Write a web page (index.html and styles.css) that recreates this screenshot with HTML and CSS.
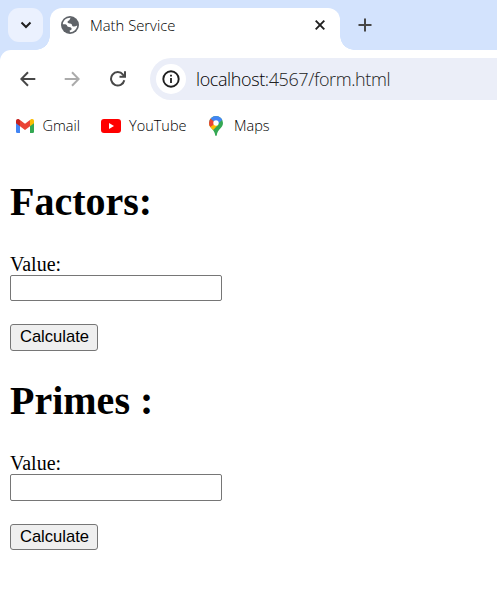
FILE: index.html
```
<!DOCTYPE html>
<html lang="en">
<head>
<meta charset="utf-8">
<title>Math Service</title>
<link rel="stylesheet" href="styles.css">
</head>
<body>
<header class="browser">
  <div class="tab-strip">
    <div class="tab-search">
      <svg width="12" height="8" viewBox="0 0 12 8"><path d="M1.5 1.5 6 6l4.5-4.5" fill="none" stroke="#1f1f1f" stroke-width="2"/></svg>
    </div>
    <div class="tab">
      <svg class="globe" width="20" height="20" viewBox="0 0 20 20"><circle cx="10" cy="10" r="9" fill="#5f6368"/><path d="M10.8 2.8C9.6 3.8 10 5.3 8.5 5.8C7.2 6.3 7.2 8.1 8.6 8.2C10.4 8.3 12 8.6 12 10.2C12.2 12 15 12 17.2 10.6C16.8 14.4 13.8 17.2 10 17.3L9.6 15.4C11.2 15.2 12 14.4 11.5 13.2C11 12 9.4 12.4 8 11.8C6.8 11.2 7.2 9.5 5.4 9.3L2.8 9.2C3.2 5.4 6.6 2.5 10.8 2.8Z" fill="#fff"/></svg>
      <span class="tab-title">Math Service</span>
      <svg class="close" width="10" height="10" viewBox="0 0 10 10"><path d="m.7.7 8.6 8.6M9.3.7.7 9.3" stroke="#1f1f1f" stroke-width="1.9"/></svg>
    </div>
    <svg class="new-tab" width="14" height="14" viewBox="0 0 14 14"><path d="M7 .5v13M.5 7h13" stroke="#474747" stroke-width="2"/></svg>
  </div>
  <div class="toolbar">
    <svg class="back" width="16" height="16" viewBox="0 0 16 16"><path d="M15.3 8H2M8 1.2 1.3 8 8 14.8" fill="none" stroke="#474747" stroke-width="2"/></svg>
    <svg class="forward" width="16" height="16" viewBox="0 0 16 16"><path d="M.7 8H14M8 1.2 14.7 8 8 14.8" fill="none" stroke="#ababab" stroke-width="2"/></svg>
    <svg class="reload" width="16" height="16" viewBox="0 0 16 16"><path d="M14.3 9.2A6.7 6.7 0 1 1 13 3.6l1.3 1.5M15 .3v5.4H9.5" fill="none" stroke="#474747" stroke-width="2"/></svg>
    <div class="address">
      <span class="info"><svg width="18" height="18" viewBox="0 0 18 18"><circle cx="9" cy="9" r="7.7" fill="none" stroke="#1f1f1f" stroke-width="1.9"/><path d="M9 8v5M9 4.8v1.8" stroke="#1f1f1f" stroke-width="1.8"/></svg></span>
      <span class="url"><span class="host">localhost</span>:4567/form.html</span>
    </div>
  </div>
  <nav class="bookmarks">
    <span class="bookmark gmail"><svg width="18" height="14" viewBox="0 0 18 14"><path d="M0 3h4v11H1.2Q0 14 0 12.8Z" fill="#4285f4"/><path d="M14 3h4v9.8q0 1.2-1.2 1.2H14Z" fill="#34a853"/><path d="M14 1l1-.7c1.3-.8 3 0 3 1.7v2.2l-4 3Z" fill="#fbbc04"/><path d="M0 4.2V2C0 .3 1.7-.5 3 .3L4 1v6.2Z" fill="#c5221f"/><path d="M4 1l5 3.8L14 1v6.2L9 11 4 7.2Z" fill="#ea4335"/></svg><span>Gmail</span></span>
    <span class="bookmark youtube"><svg width="20" height="14" viewBox="0 0 20 14"><rect width="20" height="14" rx="3" fill="#f00"/><path d="m8 4 5 3-5 3Z" fill="#fff"/></svg><span>YouTube</span></span>
    <span class="bookmark maps"><svg width="14" height="20" viewBox="0 0 14 20"><defs><clipPath id="pin"><path d="M7 0a7 7 0 0 1 7 7c0 5-5.6 6.2-6.2 12.2Q7.6 20 7 20t-.8-.8C5.6 13.2 0 12 0 7a7 7 0 0 1 7-7Z"/></clipPath></defs><g clip-path="url(#pin)"><path d="M0 0h14v20H0Z" fill="#34a853"/><path d="M-1 7h8l2 2-6.8 7H-1Z" fill="#fbbc04"/><path d="M1.5 2.4 7 7 .6 11.4-1 8V2Z" fill="#ea4335"/><path d="M1.5 2.4 4-1h11v3L8.5 8.2Z" fill="#4285f4"/></g><circle cx="7" cy="7" r="2.7" fill="#fff"/></svg><span>Maps</span></span>
  </nav>
</header>
<main class="page">
  <form class="factors">
    <h1>Factors:</h1>
    <label for="factors-value">Value:</label>
    <input id="factors-value" type="text">
    <button type="button">Calculate</button>
  </form>
  <form class="primes">
    <h1>Primes :</h1>
    <label for="primes-value">Value:</label>
    <input id="primes-value" type="text">
    <button type="button">Calculate</button>
  </form>
</main>
</body>
</html>
```
FILE: styles.css
```
* { box-sizing: border-box; }
body { margin: 0; height: 608px; overflow: hidden; background: #fff; color: #000; font-family: "Liberation Serif", serif; }
svg { display: block; flex: none; }
.browser { height: 150px; font-family: "Open Sans", sans-serif; font-weight: 300; background: #d3e3fd; }
.tab-strip { display: flex; height: 50px; padding-top: 8px; background: #d3e3fd; }
.tab-search { display: flex; align-items: center; justify-content: center; width: 35px; height: 34px; margin-left: 8px; border-radius: 11px; background: #ebf1fe; }
.tab { position: relative; display: flex; width: 290.4px; height: 42px; margin-left: 7px; padding-left: 10px; border-radius: 12px 12px 0 0; background: #fff; }
.tab::before, .tab::after { content: ""; position: absolute; bottom: 0; width: 14px; height: 14px; }
.tab::before { left: -14px; background: radial-gradient(circle at 0 0, transparent 13.5px, #fff 14px); }
.tab::after { right: -14px; background: radial-gradient(circle at 100% 0, transparent 13.5px, #fff 14px); }
.globe { margin-top: 7px; }
.tab-title { width: 214px; margin: 6px 0 0 10px; font-size: 14.8px; line-height: 23px; color: #000; }
.close { margin: 12px 0 0 11px; }
.new-tab { margin: 10px 0 0 18px; }
.toolbar { display: flex; height: 56px; padding-top: 8px; border-radius: 11px 0 0 0; background: #fff; }
.back { margin: 13px 0 0 20px; }
.forward { margin: 13px 0 0 28px; }
.reload { margin: 13px 0 0 29.5px; }
.address { display: flex; align-items: center; flex: 1; height: 42px; margin-left: 24.5px; padding-left: 6px; border-radius: 21px 0 0 21px; background: #ebeef8; }
.info { display: flex; align-items: center; justify-content: center; width: 30px; height: 30px; border-radius: 50%; background: #fff; }
.url { margin-left: 10px; font-size: 18px; letter-spacing: -.4px; line-height: 26px; color: #222; white-space: nowrap; }
.host { color: #000; }
.bookmarks { display: flex; height: 44px; background: #fff; color: #000; font-size: 14.5px; line-height: 20px; }
.bookmark { display: flex; align-items: center; height: 40px; }
.gmail { width: 85px; margin-left: 16px; gap: 8.5px; }
.youtube { width: 108px; gap: 8px; }
.maps { gap: 11px; }
.page { padding: 29px 10px 0; }
form { display: flex; flex-direction: column; align-items: flex-start; }
h1 { margin: 0 0 27px; font-size: 40px; line-height: 46px; font-weight: 700; }
label { height: 23px; font-size: 20px; line-height: 25px; }
input { width: 212px; height: 26px; margin: 0; padding: 1px 2px; border: 1px solid #767676; border-radius: 2px; background: #fff; font: 16.6px "Liberation Sans", sans-serif; }
button { width: 88px; height: 27px; margin: 23px 0 0; padding: 0 0 2px 1px; border: 1px solid #767676; border-radius: 3px; background: #efefef; color: #000; font: 16.6px/23px "Liberation Sans", sans-serif; }
.primes { margin-top: 27px; }
.primes input { height: 27px; }
.primes button { height: 26px; padding-bottom: 1px; }
```
